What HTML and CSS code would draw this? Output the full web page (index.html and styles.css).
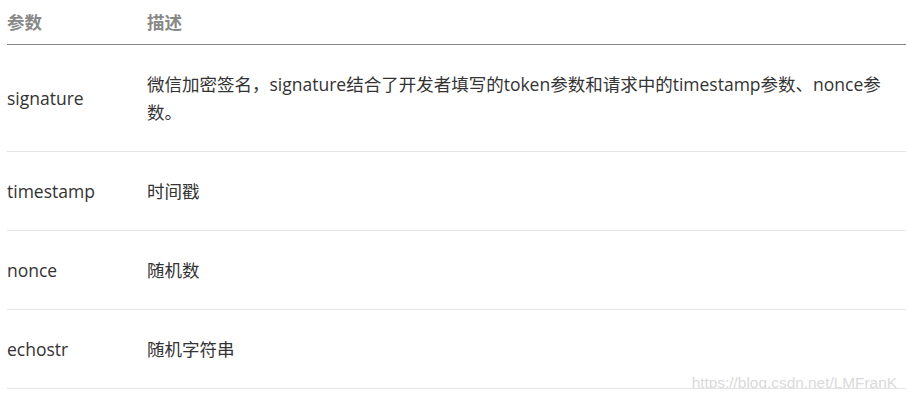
FILE: index.html
```html
<!DOCTYPE html>
<html lang="zh-CN">
<head>
<meta charset="utf-8">
<link rel="stylesheet" href="styles.css">
</head>
<body>
<div class="wrap">
<table class="params">
  <thead>
    <tr><th class="c1">参数</th><th class="c2">描述</th></tr>
  </thead>
  <tbody>
    <tr><td class="c1">signature</td><td class="c2">微信加密签名，signature结合了开发者填写的token参数和请求中的timestamp参数、nonce参数。</td></tr>
    <tr><td class="c1">timestamp</td><td class="c2">时间戳</td></tr>
    <tr><td class="c1">nonce</td><td class="c2">随机数</td></tr>
    <tr><td class="c1">echostr</td><td class="c2">随机字符串</td></tr>
  </tbody>
</table>
<div class="watermark">https://blog.csdn.net/LMFranK</div>
</div>
</body>
</html>
```
FILE: styles.css
```css
html, body {
  margin: 0;
  padding: 0;
  background: #fff;
}
.wrap {
  position: relative;
  padding-left: 7px;
  width: 899px;
}
.params {
  width: 899px;
  border-collapse: collapse;
  font-family: "Open Sans", "Noto Sans CJK SC", sans-serif;
  font-size: 17.5px;
  line-height: 28px;
  color: #333;
}
.params th {
  text-align: left;
  font-weight: bold;
  color: #888;
  padding: 8px 0;
  border-bottom: 1px solid #888;
}
.params td {
  padding: 25px 0;
  border-bottom: 1px solid #e5e5e5;
  vertical-align: middle;
}
.params td.c2 {
  padding-right: 12px;
}
.params .c1 {
  width: 140px;
}
.watermark {
  position: absolute;
  right: 9px;
  bottom: -3px;
  font-family: "Liberation Sans", Arial, sans-serif;
  font-size: 15.4px;
  color: #dadada;
}
```
